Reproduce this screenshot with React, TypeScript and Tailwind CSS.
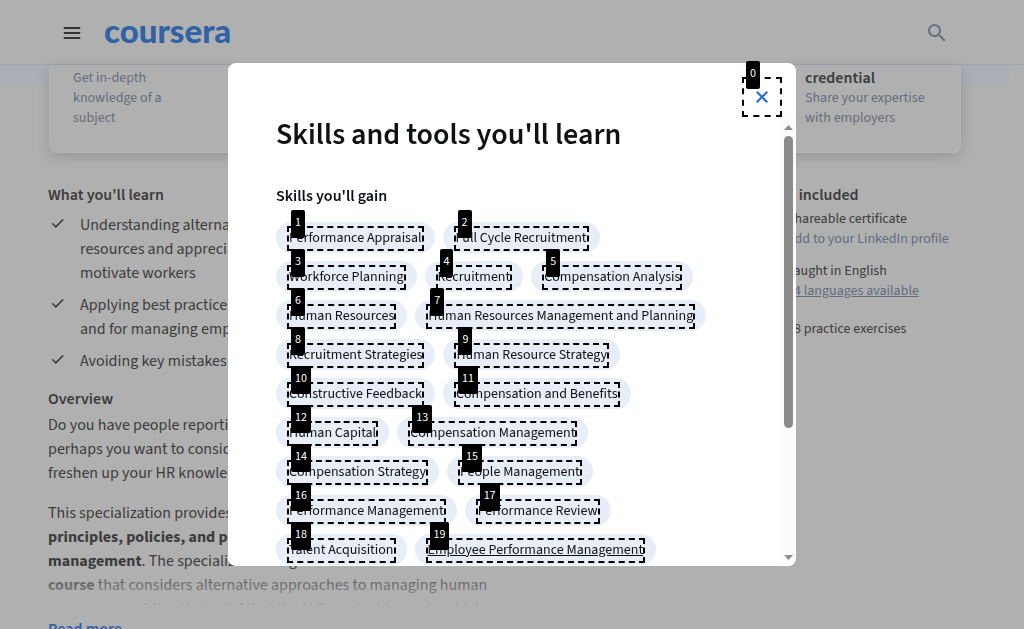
import { MdSearch } from "react-icons/md";

const skills = [
  "Performance Appraisal",
  "Full Cycle Recruitment",
  "Workforce Planning",
  "Recruitment",
  "Compensation Analysis",
  "Human Resources",
  "Human Resources Management and Planning",
  "Recruitment Strategies",
  "Human Resource Strategy",
  "Constructive Feedback",
  "Compensation and Benefits",
  "Human Capital",
  "Compensation Management",
  "Compensation Strategy",
  "People Management",
  "Performance Management",
  "Performance Review",
  "Talent Acquisition",
  "Employee Performance Management",
];

const outcomes = [
  ["Understanding alternative approaches to human", "resources and appreciating how to lead and", "motivate workers"],
  ["Applying best practices for hiring employees", "and for managing employee performance"],
  ["Avoiding key mistakes in managing people"],
];

function Marker({ n }: { n: number }) {
  return (
    <>
      <span className="pointer-events-none absolute -inset-x-px -inset-y-0.5 border-2 border-dashed border-black" />
      <span className="pointer-events-none absolute -top-[18px] left-[3px] h-7 rounded-xs bg-black px-1 text-xs leading-[26px] text-white">
        {n}
      </span>
    </>
  );
}

function Header() {
  return (
    <header className="flex h-[65px] items-center justify-between border-b border-[#9fa4b0] pr-[75px] pl-[60px]">
      <div className="flex items-center gap-5">
        <button aria-label="Menu" className="text-[#333]">
          <svg width="24" height="24" viewBox="0 0 24 24" fill="none" stroke="currentColor" strokeWidth="1.8" strokeLinecap="round">
            <path d="M4.5 8h15M4.5 13h15M4.5 18h15" />
          </svg>
        </button>
        <a href="#home" className="pb-1 font-['Lato',sans-serif] text-[33px] leading-10 font-black text-[#3062a6]">
          coursera
        </a>
      </div>
      <button aria-label="Search" className="pt-0.5 text-[#676e80]">
        <MdSearch size={24} />
      </button>
    </header>
  );
}

function SummaryCard() {
  return (
    <div className="relative pr-[15px]">
      <div className="absolute top-0 right-[15px] left-0 h-[18px] bg-[#abaeb5]" />
      <div className="relative mr-12 ml-[49px] flex justify-between rounded-b-lg border border-t-0 border-[#b3b5ba] bg-[#b0b0b0] px-[23px] pt-[3px] pb-6 text-sm leading-5 text-[#676d7b] shadow-[0_4px_14px_rgba(0,0,0,0.14)]">
        <p className="w-[110px]">Get in-depth knowledge of a subject</p>
        <div className="w-[132px]">
          <h3 className="text-base leading-5 font-semibold text-[#3c3c3c]">credential</h3>
          <p>Share your expertise with employers</p>
        </div>
      </div>
    </div>
  );
}

function Details() {
  return (
    <main className="flex justify-between pt-[30px] pr-[63px] pl-12 text-base leading-6 text-[#3c3c3c]">
      <div className="w-[440px]">
        <h2 className="font-semibold">What you'll learn</h2>
        <ul className="flex flex-col gap-2 pt-1.5">
          {outcomes.map((lines) => (
            <li key={lines[0]} className="flex gap-4">
              <svg className="shrink-0" width="16" height="20" viewBox="0 0 16 20" fill="none" stroke="currentColor" strokeWidth="1.5">
                <path d="M4.2 10.3l3.6 3.6 7.4-7.5" />
              </svg>
              <p className="whitespace-nowrap">
                {lines.map((line) => (
                  <span key={line} className="block">{line}</span>
                ))}
              </p>
            </li>
          ))}
        </ul>
        <h2 className="pt-3.5 font-semibold">Overview</h2>
        <div className="relative mt-0.5 h-48 overflow-hidden whitespace-nowrap">
          <p>
            Do you have people reporting to you? Or<br />
            perhaps you want to consider a new role or<br />
            freshen up your HR knowledge?
          </p>
          <p className="mt-4">
            This specialization provides a robust introduction to the key<br />
            <strong>principles, policies, and practices of human resource</strong><br />
            <strong>management</strong>. The specialization begins with a <strong>foundation</strong><br />
            <strong>course</strong> that considers alternative approaches to managing human<br />
            resources, avoiding the belief that the U.S. context is one in which
          </p>
          <div className="absolute inset-x-0 bottom-0 h-10 bg-linear-to-t from-[#b0b0b0d9] to-[#b0b0b000]" />
        </div>
        <button className="mt-3 font-semibold text-[#3062a6]">Read more</button>
      </div>
      <aside className="w-[212px]">
        <h2 className="font-semibold">What's included</h2>
        <ul className="flex flex-col gap-3 pt-0.5 pl-[38px] text-sm leading-5 whitespace-nowrap">
          <li>
            Shareable certificate
            <p className="text-[#646b7d]">Add to your LinkedIn profile</p>
          </li>
          <li>
            Taught in English
            <p>
              <a href="#languages" className="text-[#646b7d] underline">24 languages available</a>
            </p>
          </li>
          <li className="py-1.5">38 practice exercises</li>
        </ul>
      </aside>
    </main>
  );
}

function Scrollbar() {
  return (
    <div className="flex w-[15px] shrink-0 flex-col items-center bg-[#fbfbfb] py-1.5">
      <svg width="9" height="5" viewBox="0 0 9 5" fill="#8b8b8b"><path d="M4.5 0L9 5H0z" /></svg>
      <div className="mt-1.5 h-[292px] w-[9px] rounded-full bg-[#8b8b8b]" />
      <svg className="mt-auto" width="9" height="5" viewBox="0 0 9 5" fill="#8b8b8b"><path d="M4.5 5L9 0H0z" /></svg>
    </div>
  );
}

function SkillsDialog() {
  return (
    <div className="fixed inset-0 flex items-center justify-center">
      <section role="dialog" aria-labelledby="skills-title" className="flex h-4/5 w-[568px] flex-col rounded-lg bg-white text-[#0f1114]">
        <div className="flex justify-end pt-4 pr-[15px] pb-1">
          <button aria-label="Close" className="relative flex h-9 w-[38px] items-center justify-center text-[#1f6ae0]">
            <svg width="12" height="12" viewBox="0 0 12 12" fill="none" stroke="currentColor" strokeWidth="2">
              <path d="M.7.7l10.6 10.6M11.3.7L.7 11.3" />
            </svg>
            <Marker n={0} />
          </button>
        </div>
        <div className="flex min-h-0 grow overflow-hidden rounded-b-lg">
          <div className="min-w-0 grow px-12">
            <h1 id="skills-title" className="text-3xl leading-8 font-semibold">Skills and tools you'll learn</h1>
            <h2 className="mt-8 text-base leading-[26px] font-semibold">Skills you'll gain</h2>
            <ul className="mt-[13px] flex flex-wrap gap-2 text-sm leading-[21px]">
              {skills.map((skill, i) => (
                <li key={skill} className="rounded-full bg-[#e8eef7] px-3 pt-1.5 pb-1">
                  <a href="#skill" className={i === skills.length - 1 ? "relative block px-px underline" : "relative block px-px"}>
                    {skill}
                    <Marker n={i + 1} />
                  </a>
                </li>
              ))}
            </ul>
          </div>
          <Scrollbar />
        </div>
      </section>
    </div>
  );
}

export default function App() {
  return (
    <div className="h-screen overflow-hidden bg-[#b0b0b0] font-['Source_Sans_3','Noto_Sans_CJK_SC',sans-serif]">
      <Header />
      <SummaryCard />
      <Details />
      <SkillsDialog />
    </div>
  );
}
